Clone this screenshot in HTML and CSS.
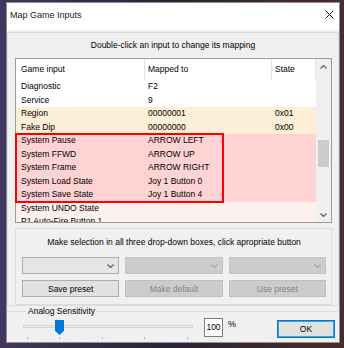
FILE: index.html
```html
<!DOCTYPE html>
<html lang="en">

<head>
    <meta charset="UTF-8">
    <meta name="viewport" content="width=device-width, initial-scale=1.0">
    <title>Map Game Inputs</title>
    <link rel="stylesheet" href="styles.css">
</head>

<body>
    <div class="window">
        <div class="titlebar">
            <span>Map Game Inputs</span>
            <svg class="close" viewBox="0 0 9 9"><path d="M0.5 0.5L8.5 8.5M8.5 0.5L0.5 8.5" /></svg>
        </div>

        <div class="panel">
            <p class="hint">Double-click an input to change its mapping</p>

            <div class="list">
                <div class="rows">
                    <div class="row head"><span>Game input</span><span>Mapped to</span><span>State</span></div>
                    <div class="row"><span>Diagnostic</span><span>F2</span><span></span></div>
                    <div class="row"><span>Service</span><span>9</span><span></span></div>
                    <div class="row dip"><span>Region</span><span>00000001</span><span>0x01</span></div>
                    <div class="row dip"><span>Fake Dip</span><span>00000000</span><span>0x00</span></div>
                    <div class="row sys"><span>System Pause</span><span>ARROW LEFT</span><span></span></div>
                    <div class="row sys"><span>System FFWD</span><span>ARROW UP</span><span></span></div>
                    <div class="row sys"><span>System Frame</span><span>ARROW RIGHT</span><span></span></div>
                    <div class="row sys"><span>System Load State</span><span>Joy 1 Button 0</span><span></span></div>
                    <div class="row sys"><span>System Save State</span><span>Joy 1 Button 4</span><span></span></div>
                    <div class="row sys-free"><span>System UNDO State</span><span></span><span></span></div>
                    <div class="row sys-free"><span>P1 Auto-Fire Button 1</span><span></span><span></span></div>
                </div>
                <div class="scrollbar">
                    <div class="sb-btn"><svg viewBox="0 0 7 4"><path d="M0.5 3.5L3.5 0.5L6.5 3.5" /></svg></div>
                    <div class="sb-track"><div class="sb-thumb"></div></div>
                    <div class="sb-btn"><svg viewBox="0 0 7 4"><path d="M0.5 0.5L3.5 3.5L6.5 0.5" /></svg></div>
                </div>
                <div class="highlight"></div>
            </div>

            <div class="presets">
                <p>Make selection in all three drop-down boxes, click apropriate button</p>
                <div class="preset-grid">
                    <div class="select"><svg viewBox="0 0 7 4"><path d="M0.5 0.5L3.5 3.5L6.5 0.5" /></svg></div>
                    <div class="select disabled"><svg viewBox="0 0 7 4"><path d="M0.5 0.5L3.5 3.5L6.5 0.5" /></svg></div>
                    <div class="select disabled"><svg viewBox="0 0 7 4"><path d="M0.5 0.5L3.5 3.5L6.5 0.5" /></svg></div>
                    <button class="btn">Save preset</button>
                    <button class="btn" disabled>Make default</button>
                    <button class="btn" disabled>Use preset</button>
                </div>
            </div>
        </div>

        <fieldset class="analog">
            <legend>Analog Sensitivity</legend>
            <div class="controls">
                <div class="slider">
                    <div class="track"></div>
                    <div class="thumb"></div>
                    <div class="ticks">
                        <span></span><span></span><span></span><span></span><span></span>
                    </div>
                </div>
                <div class="value">100</div>
                <span class="percent">%</span>
                <button class="btn ok">OK</button>
            </div>
        </fieldset>
    </div>
</body>

</html>
```

FILE: styles.css
```css
* {
    box-sizing: border-box;
}

body {
    margin: 0;
    height: 348px;
    overflow: hidden;
    font-family: 'Liberation Sans', Arial, sans-serif;
    font-size: 8.5px;
    color: #000;
    background: linear-gradient(to right, #41375f, #2a2236 50%, #4b2c2c);
}

.window {
    margin: 2px 0 0 6px;
    width: 334px;
    height: 341px;
    background: #f0f0f0;
    border: 1px solid #8f8f8f;
    display: flex;
    flex-direction: column;
    overflow: hidden;
}

.titlebar {
    flex: none;
    height: 27px;
    background: #fff;
    display: flex;
    justify-content: space-between;
    align-items: flex-start;
    padding: 6px 5px 0 3px;
    font-size: 9px;
    line-height: 12px;
    color: #222;
}

.close {
    margin-top: 1px;
    width: 9px;
    height: 9px;
    fill: none;
    stroke: #111;
    stroke-width: 1;
}

.panel {
    flex: none;
    margin-top: 2px;
    height: 274px;
    border: 1px solid #dcdcdc;
}

.hint {
    margin: 0;
    text-align: center;
    line-height: 25px;
}

/* list view */

.list {
    position: relative;
    display: flex;
    height: 165px;
    margin: 0 6px 0 7px;
    border: 1px solid #9a9a9a;
    background: #fff;
}

.rows {
    flex: 1;
    overflow: hidden;
}

.row {
    display: grid;
    grid-template-columns: 129px 127px 1fr;
    height: 13.5px;
    line-height: 13.5px;
    white-space: nowrap;
}

.row span {
    padding-left: 3px;
}

.row span:first-child {
    padding-left: 5px;
}

.row.head {
    height: 21px;
    line-height: 21px;
}

.row.head span {
    border-right: 1px solid #e5e5e5;
}

.row.dip {
    background: #fdeed7;
}

.row.sys {
    background: #ffd3d3;
}

.row.sys-free {
    background: #fff0f0;
}

.scrollbar {
    width: 15px;
    display: flex;
    flex-direction: column;
    background: #f0f0f0;
}

.sb-btn {
    height: 15px;
    display: flex;
    align-items: center;
    justify-content: center;
}

.sb-btn svg,
.select svg {
    width: 7px;
    height: 4px;
    fill: none;
    stroke: #606060;
    stroke-width: 1.2;
}

.sb-track {
    flex: 1;
}

.sb-thumb {
    margin: 66px 2px 0;
    height: 27px;
    background: #cdcdcd;
}

.highlight {
    position: absolute;
    left: -1px;
    top: 74px;
    width: 209px;
    height: 70px;
    border: 2px solid #f00;
}

/* presets */

.presets {
    margin: 5px 6px 0 7px;
    border: 1px solid #dcdcdc;
    padding: 0 5px 7px 6px;
}

.presets p {
    margin: 0;
    text-align: center;
    line-height: 26px;
}

.preset-grid {
    margin-top: 2px;
    display: grid;
    grid-template-columns: repeat(3, 1fr);
    gap: 6px;
}

.select {
    height: 17px;
    border: 1px solid #adadad;
    background: #e5e5e5;
    display: flex;
    align-items: center;
    justify-content: flex-end;
    padding-right: 4px;
}

.select.disabled {
    background: #cccccc;
    border-color: #c4c4c4;
}

.select.disabled svg {
    stroke: #a5a5a5;
}

.btn {
    height: 17px;
    margin: 0;
    padding: 0;
    border: 1px solid #adadad;
    background: #e1e1e1;
    font-family: inherit;
    font-size: 8.5px;
    color: #000;
}

.btn:disabled {
    background: #cccccc;
    border-color: #bfbfbf;
    color: #838383;
}

/* analog sensitivity */

.analog {
    margin: 0;
    padding: 0 0 0 16px;
    min-width: 0;
    border: 0;
    border-top: 1px solid #dcdcdc;
}

.analog legend {
    margin-left: 3px;
    padding: 0 2px;
    line-height: 10px;
}

.controls {
    margin-top: 2px;
    display: flex;
    align-items: flex-start;
}

.slider {
    position: relative;
    width: 170px;
    height: 21px;
}

.track {
    margin-top: 7px;
    height: 3px;
    background: #e7e7e7;
    border: 1px solid #d6d6d6;
}

.thumb {
    position: absolute;
    left: 32px;
    top: 2px;
    width: 9px;
    height: 15px;
    background: #0078d7;
    clip-path: polygon(0 0, 100% 0, 100% 72%, 50% 100%, 0 72%);
}

.ticks {
    display: flex;
    margin-top: 9px;
}

.ticks span {
    width: 1px;
    height: 2px;
    background: #b5b5b5;
}

.ticks span:nth-child(1) { margin-left: 4px; }
.ticks span:nth-child(2) { margin-left: 31px; }
.ticks span:nth-child(3) { margin-left: 42px; }
.ticks span:nth-child(4) { margin-left: 41px; }
.ticks span:nth-child(5) { margin-left: 42px; }

.value {
    margin-left: 11px;
    width: 19px;
    height: 19px;
    border: 1px solid #7a7a7a;
    background: #fff;
    text-align: center;
    line-height: 17px;
}

.percent {
    margin-left: 5px;
    font-size: 9px;
    line-height: 13px;
}

.ok {
    margin: 2px 4px 0 auto;
    width: 58px;
    height: 18px;
    border-color: #0078d7;
    box-shadow: inset 0 0 0 1px #4c9be0;
}
```
